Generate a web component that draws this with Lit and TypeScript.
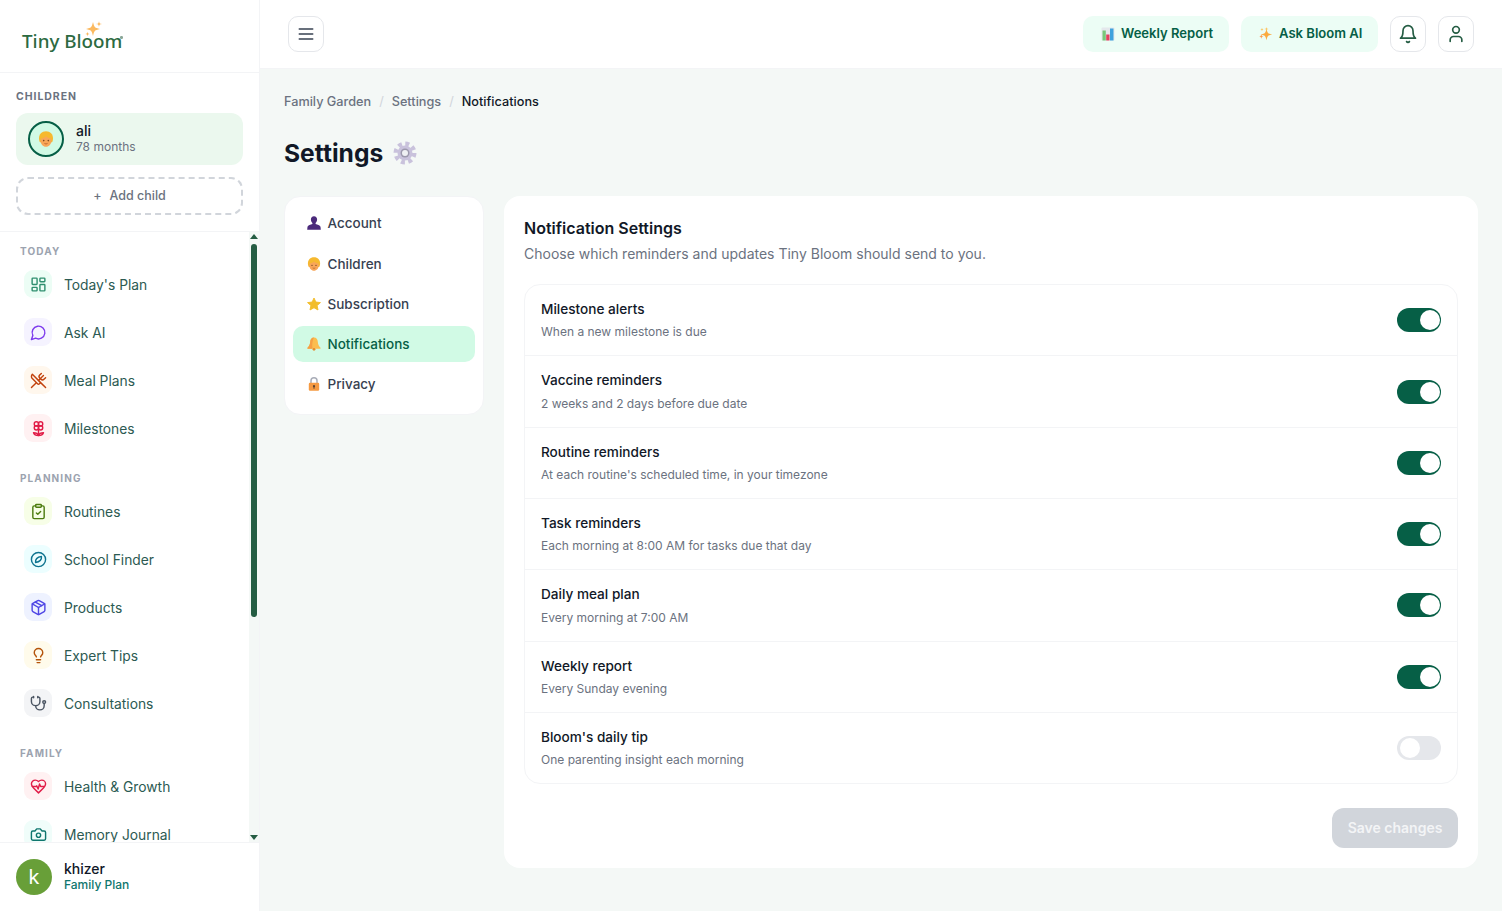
import { LitElement, html, css, svg } from "lit";
import { customElement } from "lit/decorators.js";

const star = (cx: number, cy: number, r: number, fill: string) => {
  const k = r * 0.2;
  return svg`<path fill=${fill} d="M${cx} ${cy - r}C${cx + k} ${cy - k} ${cx + k} ${cy - k} ${cx + r} ${cy}C${cx + k} ${cy + k} ${cx + k} ${cy + k} ${cx} ${cy + r}C${cx - k} ${cy + k} ${cx - k} ${cy + k} ${cx - r} ${cy}C${cx - k} ${cy - k} ${cx - k} ${cy - k} ${cx} ${cy - r}Z"/>`;
};

const strokeIcon = (content: unknown, size = 18) => html`<svg width=${size} height=${size} viewBox="0 0 24 24" fill="none" stroke="currentColor" stroke-width="2" stroke-linecap="round" stroke-linejoin="round">${content}</svg>`;

const icons = {
  plan: svg`<rect x="3" y="3" width="7" height="9" rx="1"/><rect x="14" y="3" width="7" height="5" rx="1"/><rect x="14" y="12" width="7" height="9" rx="1"/><rect x="3" y="16" width="7" height="5" rx="1"/>`,
  chat: svg`<path d="M7.9 20A9 9 0 1 0 4 16.1L2 22Z"/>`,
  meal: svg`<path d="m16 2-2.3 2.3a3 3 0 0 0 0 4.2l1.8 1.8a3 3 0 0 0 4.2 0L22 8"/><path d="M15 15 3.3 3.3a4.2 4.2 0 0 0 0 6l7.3 7.3c.7.7 2 .7 2.8 0L15 15Zm0 0 7 7"/><path d="m2.1 21.8 6.4-6.3"/><path d="m19 5-7 7"/>`,
  flower: svg`<circle cx="9" cy="5.5" r="3"/><circle cx="15" cy="5.5" r="3"/><circle cx="9" cy="11" r="3"/><circle cx="15" cy="11" r="3"/><path d="M12 14v8"/><path d="M12 22c-3 0-6-1-7-4 3 0 6 1 7 4Zm0 0c3 0 6-1 7-4-3 0-6 1-7 4Z"/>`,
  clip: svg`<rect x="8" y="2" width="8" height="4" rx="1"/><path d="M16 4h2a2 2 0 0 1 2 2v14a2 2 0 0 1-2 2H6a2 2 0 0 1-2-2V6a2 2 0 0 1 2-2h2"/><path d="m9 14 2 2 4-4"/>`,
  compass: svg`<circle cx="12" cy="12" r="10"/><path d="M16.2 7.8c.4 4-2.4 7.6-8.4 8.4-.4-4 2.4-7.6 8.4-8.4Z"/>`,
  box: svg`<path d="M21 8a2 2 0 0 0-1-1.7l-7-4a2 2 0 0 0-2 0l-7 4A2 2 0 0 0 3 8v8a2 2 0 0 0 1 1.7l7 4a2 2 0 0 0 2 0l7-4a2 2 0 0 0 1-1.7Z"/><path d="m3.3 7 8.7 5 8.7-5"/><path d="M12 22V12"/><path d="m7.5 4.3 9 5.2"/>`,
  bulb: svg`<path d="M15 14c.2-1 .7-1.7 1.5-2.5 1-.9 1.5-2.2 1.5-3.5A6 6 0 0 0 6 8c0 1 .2 2.2 1.5 3.5.7.7 1.3 1.5 1.5 2.5"/><path d="M9 18h6"/><path d="M10 22h4"/>`,
  steth: svg`<path d="M11 2v2"/><path d="M5 2v2"/><path d="M5 3H4a2 2 0 0 0-2 2v4a6 6 0 0 0 12 0V5a2 2 0 0 0-2-2h-1"/><path d="M8 15a6 6 0 0 0 12 0v-3"/><circle cx="20" cy="10" r="2"/>`,
  heart: svg`<path d="M19 14c1.5-1.500 3-3.200 3-5.500A5.500 5.500 0 0 0 16.500 3c-1.800 0-3 .5-4.500 2-1.500-1.500-2.700-2-4.500-2A5.500 5.500 0 0 0 2 8.500c0 2.300 1.500 4 3 5.500l7 7Z"/><path d="M3.200 12H9l.5-1 2 4.500 2-7 1.500 3.500h5.300"/>`,
  camera: svg`<path d="M14.500 4h-5L7 7H4a2 2 0 0 0-2 2v9a2 2 0 0 0 2 2h16a2 2 0 0 0 2-2V9a2 2 0 0 0-2-2h-3l-2.500-3Z"/><circle cx="12" cy="13" r="3"/>`,
};

const baby = (s: number) => html`<svg width=${s} height=${s} viewBox="1 0.300 14 15.400"><path d="M8 .6c4.200 0 6.700 2.800 6.700 6.800 0 1.500-.4 3-1 3.800H2.300c-.6-.8-1-2.300-1-3.800C1.300 3.400 3.800.6 8 .6Z" fill="#f6b92f"/><path d="M3.300 7.500C5 7.300 7 6.500 8 5.300c1 1.200 3 2 4.700 2.200.4.800.5 1.300.5 2.200 0 3.200-2.300 5.800-5.200 5.800S2.800 12.900 2.800 9.700c0-.9.100-1.400.5-2.200Z" fill="#f8a659"/><circle cx="5.800" cy="9.500" r=".8" fill="#7a4a22"/><circle cx="10.200" cy="9.500" r=".8" fill="#7a4a22"/><path d="M6.500 12.300q1.500 1 3 0" stroke="#b8602a" stroke-width=".8" fill="none"/></svg>`;

const emoji: Record<string, () => unknown> = {
  account: () => html`<svg width="14" height="14" viewBox="0 0 14 14"><path d="M7 .3c2 0 3.100 1.400 3.100 3.300 0 1.500-.7 2.700-1.500 3.400v1c1.800.5 4.400 1.300 4.900 2.800l.3 2.900H.2l.3-2.900c.5-1.500 3.100-2.300 4.900-2.800V7C4.600 6.300 3.900 5.100 3.900 3.600 3.900 1.700 5 .3 7 .3Z" fill="#4b2a7b"/></svg>`,
  child: () => baby(14),
  star: () => html`<svg width="14" height="14" viewBox="0 0 15 14"><path d="M7.500.6l2 4.300 4.900.6-3.600 3.200 1 4.700-4.300-2.400-4.300 2.400 1-4.700L.6 5.500l4.900-.6Z" fill="#f2bd2c" stroke="#f2bd2c" stroke-linejoin="round" stroke-width="1"/></svg>`,
  bell: () => html`<svg width="14" height="14" viewBox="0 0 14 14"><path d="M7 .5c2.300 0 3.700 1.800 3.800 4.200.1 3 1.500 4.800 2.700 6v1H.5v-1C1.700 9.500 3.100 7.700 3.200 4.700 3.300 2.300 4.700.5 7 .5Z" fill="#fbbd4f"/><path d="M7 .5C4.700.5 3.300 2.300 3.200 4.700 3.100 7.700 1.700 9.500.5 10.700v1H5.500C4.800 8 5.500 3 7 .5Z" fill="#f59f45"/><circle cx="7" cy="12.300" r="1.400" fill="#e58a2c"/></svg>`,
  lock: () => html`<svg width="14" height="14" viewBox="0 0 14 14"><path d="M4 6.500V3.800a3 3 0 0 1 6 0v2.700" fill="none" stroke="#a9adb8" stroke-width="1.500"/><rect x="1.800" y="5.800" width="10.400" height="8" rx="1.200" fill="#f59a42"/><circle cx="7" cy="9.200" r="1.100" fill="#5a4030"/><rect x="6.500" y="9.500" width="1" height="2.200" fill="#5a4030"/></svg>`,
};

const chart = html`<svg width="14" height="14" viewBox="0 0 14 14"><rect x=".5" y=".5" width="13" height="13" rx="1" fill="#e4e8ec"/><rect x="1.500" y="3.500" width="3.300" height="10" fill="#79c77a"/><rect x="5.200" y="7.500" width="3.300" height="6" fill="#e4405f"/><rect x="9" y="1.500" width="3.500" height="12" fill="#3ea2dd"/></svg>`;
const sparkles = html`<svg width="14" height="14" viewBox="0 0 14 14">${star(7.500, 7.500, 5.800, "#fbab3f")}${star(7.500, 2, 2, "#fcc35f")}${star(3, 2.500, 1.700, "#fbc55e")}${star(2.300, 9.500, 2.200, "#fb9a4b")}</svg>`;
const gear = html`<svg width="24" height="24" viewBox="0 0 24 24"><circle cx="12" cy="12" r="9" fill="none" stroke="#c9c2dc" stroke-width="5" stroke-dasharray="3.800 3.270"/><circle cx="12" cy="12" r="7.500" fill="#c9c2dc"/><circle cx="12" cy="12" r="4.500" fill="#9c98ad"/><circle cx="12" cy="12" r="3" fill="#eff0f3"/></svg>`;

const groups = [
  { label: "TODAY", items: [
    ["Today's Plan", icons.plan, "#2f8f6f", "#ecfdf5"],
    ["Ask AI", icons.chat, "#7c3aed", "#f5f3ff"],
    ["Meal Plans", icons.meal, "#c2410c", "#fff7ed"],
    ["Milestones", icons.flower, "#e11d48", "#fff1f2"],
  ]},
  { label: "PLANNING", items: [
    ["Routines", icons.clip, "#4d7c0f", "#f7fee7"],
    ["School Finder", icons.compass, "#0e7490", "#ecfeff"],
    ["Products", icons.box, "#4f46e5", "#eef2ff"],
    ["Expert Tips", icons.bulb, "#b45309", "#fffbeb"],
    ["Consultations", icons.steth, "#4b5563", "#f3f4f6"],
  ]},
  { label: "FAMILY", items: [
    ["Health & Growth", icons.heart, "#e11d48", "#fff1f2"],
    ["Memory Journal", icons.camera, "#0f766e", "#f0fdfa"],
  ]},
];

const settingsNav = [
  ["Account", "account", false],
  ["Children", "child", false],
  ["Subscription", "star", false],
  ["Notifications", "bell", true],
  ["Privacy", "lock", false],
] as const;

const rows: [string, string, boolean][] = [
  ["Milestone alerts", "When a new milestone is due", true],
  ["Vaccine reminders", "2 weeks and 2 days before due date", true],
  ["Routine reminders", "At each routine's scheduled time, in your timezone", true],
  ["Task reminders", "Each morning at 8:00 AM for tasks due that day", true],
  ["Daily meal plan", "Every morning at 7:00 AM", true],
  ["Weekly report", "Every Sunday evening", true],
  ["Bloom's daily tip", "One parenting insight each morning", false],
];

@customElement("app-root")
export class AppRoot extends LitElement {
  static styles = css`
    :host { display: flex; height: 100vh; overflow: hidden; background: #f4f8f6; font-family: Inter, "Noto Sans", sans-serif; color: #111827; }
    * { box-sizing: border-box; }
    .sidebar { width: 260px; flex: none; height: 100%; background: #fff; border-right: 1px solid #f3f4f6; display: flex; flex-direction: column; }
    .logo { height: 73px; flex: none; border-bottom: 1px solid #f3f4f6; padding: 30px 0 0 22px; position: relative; }
    .logo-text { font-size: 18.800px; line-height: 22px; font-family: "Noto Sans", Inter, sans-serif; font-weight: 500; color: #2c6a41; }
    .logo svg { position: absolute; left: 84px; top: 20px; }
    .logo .tm { position: absolute; left: 120px; top: 36px; width: 2.500px; height: 2.500px; border-radius: 50%; background: #8aa696; }
    .children { flex: none; height: 159px; padding: 17px 16px 0; border-bottom: 1px solid #f3f4f6; }
    .children-label { font-size: 10.500px; line-height: 13px; font-weight: 700; letter-spacing: 0.09em; color: #6b7280; margin-bottom: 10px; }
    .child-card { height: 52px; border-radius: 12px; background: #ebf8ee; display: flex; align-items: center; gap: 12px; padding: 0 12px; }
    .child-avatar { width: 36px; height: 36px; border-radius: 50%; border: 2px solid #065f46; background: #d1fae5; display: flex; align-items: center; justify-content: center; flex: none; }
    .child-name { font-size: 14px; line-height: 16px; font-weight: 500; color: #111827; margin-top: -2px; }
    .child-age { font-size: 12px; line-height: 15px; color: #6b7280; }
    .add-child { margin-top: 12px; height: 38px; border: 2px dashed #d1d5db; border-radius: 12px; display: flex; align-items: center; justify-content: center; gap: 8px; font-size: 12.500px; line-height: 15px; padding-bottom: 1px; font-weight: 500; color: #6b7280; }
    .scroll-wrap { flex: 1; min-height: 0; position: relative; }
    .scroll { height: 100%; overflow-y: scroll; scrollbar-width: none; padding-top: 8px; }
    .scroll-inner { padding-bottom: 100px; }
    .track { position: absolute; top: 0; right: 0; bottom: 0; width: 10px; background: #f4f8f6; display: flex; flex-direction: column; align-items: center; }
    .arrow-up { margin-top: 2px; width: 0; height: 0; border: 4px solid transparent; border-top: 0; border-bottom: 5px solid #245c43; }
    .thumb { margin-top: 5px; width: 6px; height: 373px; border-radius: 3px; background: #245c43; }
    .arrow-down { margin-top: auto; margin-bottom: 2px; width: 0; height: 0; border: 4px solid transparent; border-bottom: 0; border-top: 5px solid #245c43; }
    .group-label { height: 20px; line-height: 22px; padding-left: 20px; font-size: 10px; font-weight: 700; letter-spacing: 0.11em; color: #9ca3af; }
    .group { margin-bottom: 15px; }
    .item { height: 48px; display: flex; align-items: center; gap: 12px; padding-left: 24px; font-size: 13.800px; line-height: 20px; font-weight: 400; color: #2c5a52; white-space: nowrap; }
    .item-label { position: relative; top: 0.500px; }
    .icon-box { width: 28px; height: 28px; border-radius: 9px; display: flex; align-items: center; justify-content: center; flex: none; }
    .user { flex: none; height: 69px; border-top: 1px solid #f3f4f6; padding: 0 16px; display: flex; align-items: center; gap: 12px; background: #fff; }
    .user-avatar { width: 36px; height: 36px; border-radius: 50%; background: #689f38; color: #fff; display: flex; align-items: center; justify-content: center; font-size: 20px; flex: none; }
    .user-name { font-size: 14px; line-height: 16px; font-weight: 500; color: #111827; margin-top: -1px; }
    .user-plan { font-size: 12px; line-height: 16px; font-weight: 500; color: #0f766e; }
    .main { flex: 1; min-width: 0; display: flex; flex-direction: column; }
    .header { height: 69px; flex: none; background: #fff; border-bottom: 1px solid #f3f4f6; display: flex; align-items: center; padding: 0 28px; gap: 12px; }
    .icon-btn { width: 36px; height: 36px; border: 1px solid #e5e7eb; border-radius: 10px; background: #fff; display: flex; align-items: center; justify-content: center; flex: none; color: #245c43; }
    .icon-btn.menu { color: #374151; margin-right: auto; }
    .pill { height: 36px; width: 146px; justify-content: flex-start; border-radius: 10px; background: #ecfdf5; color: #065f46; font-size: 13.050px; line-height: 16px; font-weight: 600; display: flex; align-items: center; gap: 6px; padding: 0 0 0 18px; white-space: nowrap; }
    .pill span { position: relative; top: -1px; }
    .pill.ask { width: 137px; }
    .content { flex: 1; min-height: 0; padding: 22px 24px 0; }
    .crumbs { display: flex; align-items: center; height: 20px; font-size: 12.700px; font-weight: 500; color: #6b7280; gap: 8px; }
    .crumbs .sep { color: #d1d5db; font-weight: 400; }
    .crumbs .now { color: #111827; }
    .title { display: flex; align-items: center; gap: 10px; margin: 26px 0 0; height: 32px; font-size: 24.600px; font-weight: 700; color: #111827; }
    .cols { display: flex; gap: 20px; margin-top: 27.150px; align-items: flex-start; }
    .snav { width: 200px; flex: none; background: #fff; border: 1px solid #f3f4f6; border-radius: 16px; padding: 8px; }
    .snav-item { height: 36.250px; margin-bottom: 4px; border-radius: 10px; display: flex; align-items: center; gap: 6.500px; padding: 0 14px; font-size: 13.500px; font-weight: 500; color: #374151; }
    .snav-item.active { background: #d1fae5; color: #065f46; }
    .panel { flex: 1; min-width: 0; background: #fff; border-radius: 16px; padding: 20px; height: 672px; }
    .panel h2 { margin: 0; font-size: 16px; line-height: 24px; font-weight: 600; color: #111827; }
    .panel p { margin: 2px 0 0; font-size: 14px; line-height: 24px; color: #6b7280; }
    .list { margin-top: 18px; border: 1px solid #f3f4f6; border-radius: 16px; height: 500px; display: flex; flex-direction: column; }
    .row { display: flex; align-items: center; justify-content: space-between; padding: 14px 16px; border-bottom: 1px solid #f3f4f6; }
    .row:last-child { border-bottom: 0; }
    .row-name { font-size: 13.600px; line-height: 20.250px; font-weight: 500; color: #111827; }
    .row-desc { font-size: 12px; line-height: 18px; margin-top: 4.050px; color: #6b7280; }
    .toggle { width: 44px; height: 24px; border-radius: 12px; background: #e5e7eb; position: relative; flex: none; }
    .toggle.on { background: #065f46; }
    .knob { position: absolute; top: 2px; left: 3px; width: 20px; height: 20px; border-radius: 50%; background: #fff; }
    .toggle.on .knob { left: 23px; }
    .actions { display: flex; justify-content: flex-end; margin-top: 24px; }
    .save { height: 40px; width: 126px; border-radius: 12px; background: #d1d5db; color: #f3f4f6; font-size: 14px; font-weight: 600; display: flex; align-items: center; justify-content: center; padding-bottom: 1px; }
  `;

  render() {
    return html`
      <aside class="sidebar">
        <div class="logo">
          <span class="logo-text">Tiny Bloom</span>
          <svg width="20" height="18" viewBox="0 0 20 18">${star(9, 9, 7, "#fbb95f")}${star(15, 4, 2.800, "#fbb95f")}${star(3.500, 14, 2.200, "#fbb95f")}</svg>
          <span class="tm"></span>
        </div>
        <div class="children">
          <div class="children-label">CHILDREN</div>
          <div class="child-card">
            <div class="child-avatar">${baby(16)}</div>
            <div><div class="child-name">ali</div><div class="child-age">78 months</div></div>
          </div>
          <div class="add-child"><span>+</span><span>Add child</span></div>
        </div>
        <div class="scroll-wrap">
          <nav class="scroll">
            <div class="scroll-inner">
              ${groups.map((g) => html`
                <div class="group">
                  <div class="group-label">${g.label}</div>
                  ${g.items.map(([label, icon, color, bg]) => html`
                    <div class="item"><span class="icon-box" style="color:${color};background:${bg}">${strokeIcon(icon, 17)}</span><span class="item-label">${label}</span></div>
                  `)}
                </div>
              `)}
            </div>
          </nav>
          <div class="track"><div class="arrow-up"></div><div class="thumb"></div><div class="arrow-down"></div></div>
        </div>
        <div class="user">
          <div class="user-avatar">k</div>
          <div><div class="user-name">khizer</div><div class="user-plan">Family Plan</div></div>
        </div>
      </aside>
      <div class="main">
        <header class="header">
          <div class="icon-btn menu">${strokeIcon(svg`<path d="M4 6h16M4 12h16M4 18h16"/>`, 20)}</div>
          <div class="pill">${chart}<span>Weekly Report</span></div>
          <div class="pill ask">${sparkles}<span>Ask Bloom AI</span></div>
          <div class="icon-btn">${strokeIcon(svg`<path d="M6 8a6 6 0 0 1 12 0c0 7 3 9 3 9H3s3-2 3-9"/><path d="M10.300 21a1.940 1.940 0 0 0 3.400 0"/>`, 20)}</div>
          <div class="icon-btn">${strokeIcon(svg`<path d="M19 21v-2a4 4 0 0 0-4-4H9a4 4 0 0 0-4 4v2"/><circle cx="12" cy="7" r="4"/>`, 20)}</div>
        </header>
        <main class="content">
          <div class="crumbs"><span>Family Garden</span><span class="sep">/</span><span>Settings</span><span class="sep">/</span><span class="now">Notifications</span></div>
          <h1 class="title">Settings ${gear}</h1>
          <div class="cols">
            <div class="snav">
              ${settingsNav.map(([label, key, active]) => html`
                <div class="snav-item ${active ? "active" : ""}">${emoji[key]()}${label}</div>
              `)}
            </div>
            <section class="panel">
              <h2>Notification Settings</h2>
              <p>Choose which reminders and updates Tiny Bloom should send to you.</p>
              <div class="list">
                ${rows.map(([name, desc, on]) => html`
                  <div class="row">
                    <div><div class="row-name">${name}</div><div class="row-desc">${desc}</div></div>
                    <div class="toggle ${on ? "on" : ""}"><div class="knob"></div></div>
                  </div>
                `)}
              </div>
              <div class="actions"><div class="save">Save changes</div></div>
            </section>
          </div>
        </main>
      </div>
    `;
  }
}
